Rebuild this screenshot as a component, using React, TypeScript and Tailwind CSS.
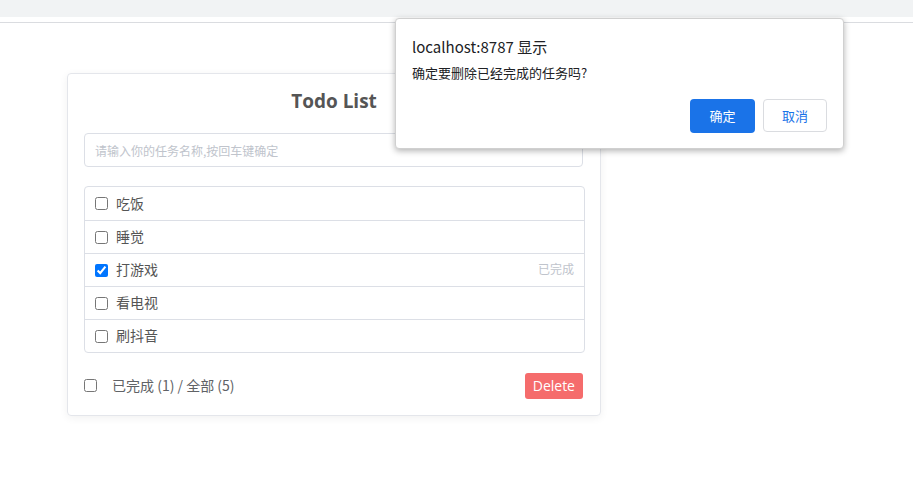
import { useState } from "react";

const cjk = { fontFamily: '"Noto Sans CJK SC", sans-serif' };
const latin = { fontFamily: '"Open Sans", "Noto Sans CJK SC", sans-serif' };

export default function App() {
  const [todos, setTodos] = useState([
    { id: 1, name: "吃饭", done: false },
    { id: 2, name: "睡觉", done: false },
    { id: 3, name: "打游戏", done: true },
    { id: 4, name: "看电视", done: false },
    { id: 5, name: "刷抖音", done: false },
  ]);

  const toggle = (id: number) =>
    setTodos(prev => prev.map(t => (t.id === id ? { ...t, done: !t.done } : t)));

  const doneCount = todos.filter(t => t.done).length;

  return (
    <div className="relative w-[913px] h-[486px] bg-white overflow-hidden" style={cjk}>
      <div className="h-[17px] bg-[#f1f3f4]" />
      <div className="h-[6px] border-b border-[#dadce0]" />

      {/* todo card */}
      <div className="ml-[67px] mt-[50px] w-[534px] border border-[#e4e6eb] rounded-[4px] shadow-[0_2px_8px_rgba(0,0,0,0.06)] px-4 pt-[14px] pb-[16px]">
        <h1 className="text-center text-[19px] leading-[26px] font-bold text-[#555]" style={latin}>
          Todo List
        </h1>
        <input
          className="mt-[19px] w-[499px] h-[34px] border border-[#dcdfe6] rounded-[4px] px-[10px] text-[12px] text-[#666] placeholder:text-[#c0c4cc] outline-none"
          placeholder="请输入你的任务名称,按回车键确定"
        />
        <ul className="mt-[19px] w-[501px] border border-[#dcdfe6] rounded-[4px]">
          {todos.map((t, i) => (
            <li
              key={t.id}
              className={`flex items-center h-[33px] pl-[10px] pr-[10px] ${i > 0 ? "border-t border-[#dcdfe6]" : ""}`}
            >
              <input
                type="checkbox"
                checked={t.done}
                onChange={() => toggle(t.id)}
                className="w-[13px] h-[13px] m-0"
              />
              <span className="ml-[8px] text-[14px] leading-[20px] -mt-[2px] text-[#555]">{t.name}</span>
              {t.done && <span className="ml-auto text-[12px] -mt-[2px] text-[#c0c4cc]">已完成</span>}
            </li>
          ))}
        </ul>
        <div className="mt-[19px] flex items-center h-[27px]">
          <input type="checkbox" className="w-[13px] h-[13px] m-0" />
          <span className="ml-[15px] text-[14px] leading-[20px] -mt-[1px] text-[#606266]">
            已完成 ({doneCount}) / 全部 ({todos.length})
          </span>
          <button
            className="ml-auto mr-[1px] h-[26px] px-[8px] bg-[#f56c6c] text-white text-[14px] rounded-[3px]"
            style={latin}
          >
            Delete
          </button>
        </div>
      </div>

      {/* browser confirm dialog */}
      <div className="absolute left-[395px] top-[18px] w-[449px] h-[131px] bg-white border border-[#d0d0d0] rounded-[4px] shadow-[0_2px_6px_rgba(0,0,0,0.3)] px-[16px] pt-[17px]">
        <div className="text-[15px] leading-[22px] text-[#202124]">localhost:8787 显示</div>
        <div className="mt-[6px] text-[13px] leading-[18px] text-[#202124]">确定要删除已经完成的任务吗?</div>
        <div className="mt-[17px] flex justify-end gap-[8px] pr-[0px]">
          <button className="w-[65px] h-[34px] bg-[#1a73e8] text-white text-[13px] rounded-[4px]">确定</button>
          <button className="w-[64px] h-[33px] border border-[#dadce0] text-[#1a73e8] text-[13px] rounded-[4px]">取消</button>
        </div>
      </div>
    </div>
  );
}
